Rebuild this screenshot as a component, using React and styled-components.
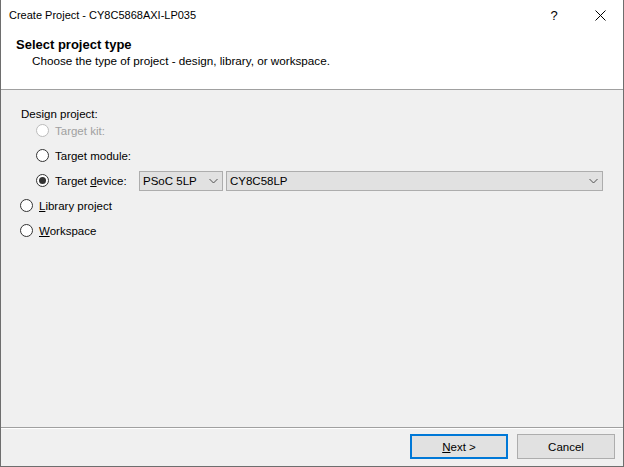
import React from 'react';
import styled, {createGlobalStyle} from 'styled-components';

const GlobalStyle = createGlobalStyle`
  html, body {
    margin: 0;
    padding: 0;
    background: #ffffff;
  }
  body {
    font-family: "Liberation Sans", "Noto Sans CJK JP", sans-serif;
    font-size: 12px;
    color: #000;
  }
`;

const Window = styled.div`
  width: 624px;
  height: 467px;
  box-sizing: border-box;
  border-left: 1px solid #6e6e6e;
  border-right: 1px solid #6e6e6e;
  border-bottom: 1px solid #6e6e6e;
  display: flex;
  flex-direction: column;
  background: #f0f0f0;
  overflow: hidden;
`;

const TitleBar = styled.div`
  height: 30px;
  flex: none;
  background: #fff;
  display: flex;
  align-items: center;
  padding-left: 8px;
`;

const Title = styled.div`
  flex: 1;
  font-size: 11px;
  color: #000;
`;

const TitleButton = styled.div`
  width: 46px;
  height: 30px;
  display: flex;
  align-items: center;
  justify-content: center;
  font-size: 13px;
`;

const Header = styled.div`
  flex: none;
  height: 60px;
  box-sizing: border-box;
  background: #fff;
  border-bottom: 1px solid #a0a0a0;
  padding: 7px 0 0 15px;
`;

const HeaderTitle = styled.div`
  font-weight: bold;
  font-size: 13px;
  line-height: 16px;
`;

const HeaderSub = styled.div`
  font-size: 11.7px;
  line-height: 15px;
  padding-left: 16px;
`;

const Body = styled.div`
  flex: 1;
  padding: 18px 20px 0 19px;
  display: flex;
  flex-direction: column;
`;

const GroupLabel = styled.div`
  font-size: 11.5px;
  line-height: 12px;
  padding-left: 1px;
  margin-bottom: -2px;
`;

const Row = styled.div`
  display: flex;
  align-items: center;
  gap: 3px;
  height: 25px;
  padding-left: ${p => p.indent ? '16px' : '0'};
  color: ${p => p.disabled ? '#a0a0a0' : '#000'};
  font-size: 11.5px;
`;

const Radio = styled.span`
  width: 11px;
  height: 11px;
  border-radius: 50%;
  border: 1px solid ${p => p.disabled ? '#bcbcbc' : '#333'};
  background: #fff;
  margin-right: 3px;
  display: flex;
  align-items: center;
  justify-content: center;
  flex: none;

  &::after {
    content: '';
    display: ${p => p.checked ? 'block' : 'none'};
    width: 7px;
    height: 7px;
    border-radius: 50%;
    background: #333;
  }
`;

const RadioLabel = styled.span`
  width: ${p => p.width || 'auto'};
`;

const Select = styled.div`
  height: 20px;
  box-sizing: border-box;
  border: 1px solid #adadad;
  background: #e1e1e1;
  display: flex;
  align-items: center;
  padding: 0 4px 0 3px;
  width: ${p => p.width || 'auto'};
  flex: ${p => p.grow ? 1 : 'none'};
  font-size: 11.5px;
  color: #000;
`;

const SelectValue = styled.span`
  flex: 1;
`;

const Footer = styled.div`
  height: 39px;
  flex: none;
  border-top: 1px solid #a0a0a0;
  box-shadow: inset 0 1px 0 #fff;
  display: flex;
  justify-content: flex-end;
  align-items: flex-start;
  gap: 9px;
  padding: 6px 8px 0 0;
  box-sizing: border-box;
`;

const Button = styled.div`
  width: 98px;
  height: 25px;
  box-sizing: border-box;
  border: ${p => p.primary ? '2px solid #0078d7' : '1px solid #adadad'};
  background: #e1e1e1;
  display: flex;
  align-items: center;
  justify-content: center;
  font-size: 11.5px;
`;

const Chevron = () => (
  <svg width="9" height="6" viewBox="0 0 9 6">
    <path d="M0.5 1 L4.5 5 L8.5 1" fill="none" stroke="#505050" strokeWidth="1"/>
  </svg>
);

export default function App() {
  return (
    <>
      <GlobalStyle/>
      <Window>
        <TitleBar>
          <Title>Create Project - CY8C5868AXI-LP035</Title>
          <TitleButton>?</TitleButton>
          <TitleButton>
            <svg width="11" height="11" viewBox="0 0 11 11">
              <path d="M0.5 0.5 L10.5 10.5 M10.5 0.5 L0.5 10.5" stroke="#000" strokeWidth="1"/>
            </svg>
          </TitleButton>
        </TitleBar>
        <Header>
          <HeaderTitle>Select project type</HeaderTitle>
          <HeaderSub>Choose the type of project - design, library, or workspace.</HeaderSub>
        </Header>
        <Body>
          <GroupLabel>Design project:</GroupLabel>
          <Row indent disabled>
            <Radio disabled/>
            <RadioLabel>Target kit:</RadioLabel>
          </Row>
          <Row indent>
            <Radio/>
            <RadioLabel>Target module:</RadioLabel>
          </Row>
          <Row indent>
            <Radio checked/>
            <RadioLabel width="81px">Target <u>d</u>evice:</RadioLabel>
            <Select width="84px">
              <SelectValue>PSoC 5LP</SelectValue>
              <Chevron/>
            </Select>
            <Select grow>
              <SelectValue>CY8C58LP</SelectValue>
              <Chevron/>
            </Select>
          </Row>
          <Row>
            <Radio/>
            <RadioLabel><u>L</u>ibrary project</RadioLabel>
          </Row>
          <Row>
            <Radio/>
            <RadioLabel><u>W</u>orkspace</RadioLabel>
          </Row>
        </Body>
        <Footer>
          <Button primary><span><u>N</u>ext &gt;</span></Button>
          <Button>Cancel</Button>
        </Footer>
      </Window>
    </>
  );
}
